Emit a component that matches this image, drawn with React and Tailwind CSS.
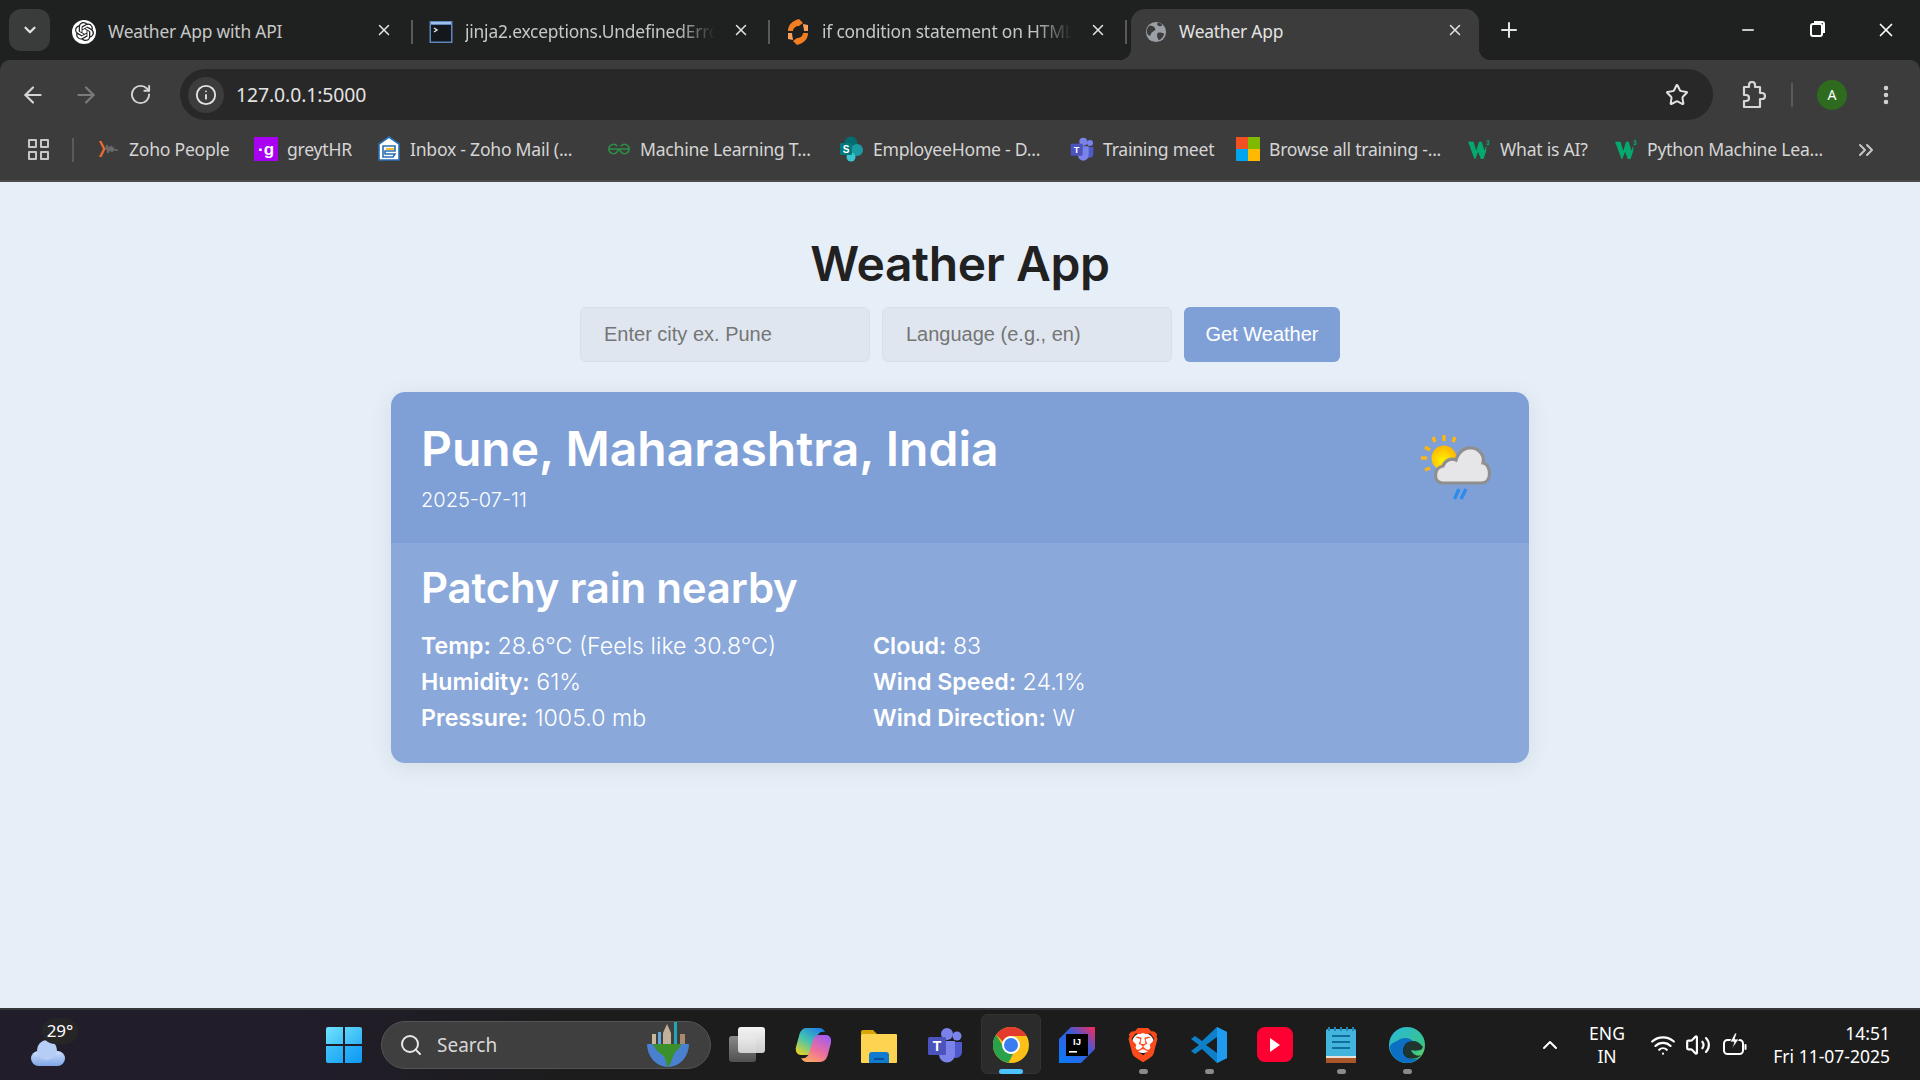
import React from 'react';
import { ArrowLeft, ArrowRight, RotateCw, Info, Star, EllipsisVertical, ChevronDown, ChevronUp, ChevronsRight, X, Plus, Minus, Search, Wifi, Volume2 } from 'lucide-react';
import { SiOpenai, SiBrave } from 'react-icons/si';

const uiFont = "font-['Noto_Sans',sans-serif]";

/* ---------- favicons ---------- */
function Globe({ className }) {
  return (
    <svg viewBox="0 0 24 24" className={className}>
      <circle cx="12" cy="12" r="11" fill="#9aa0a6" />
      <path d="M5 5c3 0 5 1 6 3s-1 3-3 4-1 4-3 4-3-3-3-5 1-4 3-6zM14 13c2-1 5 0 7 1-1 3-3 6-6 7-1-2-3-6-1-8zM14 2c2 0 4 1 5 3-2 1-4 1-5 0s-1-2 0-3z" fill="#3c3c3c" />
    </svg>
  );
}

function CmdIcon() {
  return (
    <svg viewBox="0 0 24 24" className="w-6 h-6">
      <rect x="0.5" y="1" width="23" height="22" fill="#5f86bd" />
      <rect x="2" y="5" width="20" height="16.5" fill="#14181d" />
      <rect x="2" y="2" width="20" height="2" fill="#9cc0ea" />
      <path d="M5 8l3 2-3 2" stroke="#e8e8e8" strokeWidth="1.4" fill="none" />
    </svg>
  );
}

function HubIcon() {
  return (
    <svg viewBox="0 0 22 26" className="w-[22px] h-[26px]">
      <path d="M12 0l4 4-4 3c-3 0-6 2-6 5H1C1 6 5 2 12 0z" fill="#f37d22" />
      <path d="M10 26l-4-4 4-3c3 0 6-2 6-5h5c0 6-4 10-11 12z" fill="#f37d22" />
      <path d="M16 5l5 1v6h-4c0-3-1-5-1-7zM6 21l-5-1v-6h4c0 3 1 5 1 7z" fill="#f9a15a" />
    </svg>
  );
}

function ZohoIcon() {
  return (
    <svg viewBox="0 0 24 24" className="w-6 h-6">
      <path d="M3 4l4 8-4 8h2.5l4-8-4-8z" fill="#ef6b2c" />
      <path d="M9 12h1l1-4 1 8 1-6 1 4 1-5 1 6 1-4 1 2h4" stroke="#6a6a6a" strokeWidth="1.6" fill="none" />
    </svg>
  );
}

function GreytIcon() {
  return (
    <div className="w-6 h-6 bg-[#a800f0] flex items-center justify-center text-white text-[17px] font-bold leading-none font-['Liberation_Sans',sans-serif]">·g</div>
  );
}

function MailIcon() {
  return (
    <svg viewBox="0 0 24 26" className="w-6 h-[26px]">
      <path d="M12 1l10 7v16H2V8z" fill="#fff" stroke="#2a6fb5" strokeWidth="1.6" />
      <path d="M6 10h12v5H8v3h10l-2 3H6z" fill="none" stroke="#2a6fb5" strokeWidth="1.6" />
      <path d="M9 13h8" stroke="#f3b61c" strokeWidth="1.8" />
    </svg>
  );
}

function GfgIcon() {
  return (
    <svg viewBox="0 0 26 14" className="w-[24px] h-[14px]">
      <path d="M13 7H2a5 5 0 0 1 9-3M13 7h11a5 5 0 0 0-9-3M2 7a5 5 0 0 0 9 3l2-3M24 7a5 5 0 0 1-9 3l-2-3" fill="none" stroke="#2f8d46" strokeWidth="1.7" />
    </svg>
  );
}

function SharePointIcon() {
  return (
    <svg viewBox="0 0 24 26" className="w-6 h-[26px]">
      <circle cx="11" cy="7" r="6.5" fill="#036c70" />
      <circle cx="17" cy="14" r="6" fill="#1a9ba1" />
      <circle cx="11" cy="21" r="4.5" fill="#37c6d0" />
      <rect x="0" y="7" width="12" height="12" rx="1" fill="#03787c" />
      <text x="6" y="17" fontSize="10" fontWeight="700" fill="#fff" textAnchor="middle" fontFamily="Liberation Sans, sans-serif">S</text>
    </svg>
  );
}

function TeamsIcon({ className }) {
  return (
    <svg viewBox="0 0 36 36" className={className}>
      <circle cx="30" cy="9" r="4.5" fill="#7b83eb" />
      <path d="M24 15h11v10a6 6 0 0 1-6 6c-3 0-5-2-5-5z" fill="#5059c9" />
      <circle cx="20" cy="7" r="6" fill="#7b83eb" />
      <path d="M11 14h17v13a8 8 0 0 1-16 1z" fill="#7b83eb" />
      <rect x="1" y="10" width="18" height="18" rx="1.5" fill="#4b53bc" />
      <text x="10" y="24" fontSize="14" fontWeight="700" fill="#fff" textAnchor="middle" fontFamily="Liberation Sans, sans-serif">T</text>
    </svg>
  );
}

function MsIcon() {
  return (
    <div className="w-6 h-6 grid grid-cols-2 grid-rows-2">
      <div className="bg-[#f25022]" />
      <div className="bg-[#7fba00]" />
      <div className="bg-[#00a4ef]" />
      <div className="bg-[#ffb900]" />
    </div>
  );
}

function W3Icon() {
  return (
    <svg viewBox="0 0 24 22" className="w-[22px] h-[20px]">
      <path d="M0 3h6l3 10 3-10h3l3 10 2-6v6l-3 9h-3l-3-8-3 8H7z" fill="#04aa6d" />
      <text x="20" y="7" fontSize="7" fill="#04aa6d" fontWeight="700" fontFamily="Liberation Sans, sans-serif">3</text>
    </svg>
  );
}

function ExtensionIcon() {
  return (
    <svg viewBox="0 0 26 28" className="w-[26px] h-[28px]" fill="none" stroke="#d5d5d5" strokeWidth="2.2" strokeLinejoin="round">
      <path d="M4 6h5V4a3 3 0 0 1 6 0v2h5v6h2a3 3 0 0 1 0 6h-2v8H4v-6h2a3 3 0 0 0 0-6H4z" />
    </svg>
  );
}

/* ---------- browser chrome ---------- */
const tabs = [
  { title: 'Weather App with API', icon: <div className="w-6 h-6 rounded-full bg-white flex items-center justify-center"><SiOpenai className="w-[19px] h-[19px] text-[#222]" /></div> },
  { title: 'jinja2.exceptions.UndefinedError', icon: <CmdIcon />, fade: true },
  { title: 'if condition statement on HTML template', icon: <HubIcon />, fade: true },
];

function Tab({ tab, last }) {
  return (
    <div className="relative w-[357px] h-[51px] flex items-center pl-4 pb-[6px] shrink-0">
      <div className="w-6 flex justify-center shrink-0">{tab.icon}</div>
      <div className={`ml-3 w-[250px] whitespace-nowrap overflow-hidden text-[17.4px] tracking-[-0.2px] text-[#c7c7c7] ${tab.fade ? '[mask-image:linear-gradient(90deg,#000_85%,transparent)]' : ''}`}>{tab.title}</div>
      <X className="absolute left-[319px] top-[12px] w-[18px] h-[18px] text-[#e3e3e3]" strokeWidth={2} />
      {!last && <div className="absolute right-0 top-[11px] w-[2px] h-[24px] bg-[#5a5a5a]" />}
    </div>
  );
}

function TabStrip() {
  return (
    <div className="h-[60px] pl-[9px] pt-[9px] flex bg-[#1f2120] shrink-0">
      <div className="w-[41px] h-[42px] rounded-[12px] bg-[#3a3b3b] flex items-center justify-center shrink-0">
        <ChevronDown className="w-[18px] h-[18px] text-[#e3e3e3]" strokeWidth={3} />
      </div>
      <div className="ml-[6px] flex">
        {tabs.map((t) => <Tab key={t.title} tab={t} />)}
        {/* active tab */}
        <div className="relative ml-[4px] w-[348px] h-[51px] bg-[#3c3c3c] rounded-t-[14px] flex items-center pl-[14px] pb-[6px] shrink-0">
          <div className="absolute left-[-12px] bottom-0 w-3 h-3 bg-[radial-gradient(circle_at_0_0,transparent_12px,#3c3c3c_12.5px)]" />
          <div className="absolute right-[-12px] bottom-0 w-3 h-3 bg-[radial-gradient(circle_at_100%_0,transparent_12px,#3c3c3c_12.5px)]" />
          <Globe className="w-[22px] h-[22px]" />
          <div className="ml-3 text-[17.4px] tracking-[-0.2px] text-[#e3e3e3] whitespace-nowrap">Weather App</div>
          <X className="absolute left-[315px] top-[12px] w-[18px] h-[18px] text-[#e3e3e3]" strokeWidth={2} />
        </div>
        <Plus className="ml-[18px] mt-[9px] w-6 h-6 text-[#e3e3e3]" strokeWidth={2} />
      </div>
      <div className="ml-auto flex -mt-[9px]">
        <div className="w-[69px] h-[60px] flex items-center justify-center"><Minus className="w-[18px] h-[18px] text-white" strokeWidth={2} /></div>
        <div className="w-[69px] h-[60px] flex items-center justify-center">
          <div className="relative w-[13px] h-[14px] border-2 border-white rounded-[3px]">
            <div className="absolute -top-[4px] -right-[4px] w-[11px] h-[12px] border-t-2 border-r-2 border-white rounded-tr-[3px]" />
          </div>
        </div>
        <div className="w-[69px] h-[60px] flex items-center justify-center"><X className="w-[22px] h-[22px] text-white" strokeWidth={1.8} /></div>
      </div>
    </div>
  );
}

function Toolbar() {
  return (
    <div className="h-[51px] flex items-center">
      <ArrowLeft className="ml-[20px] w-[26px] h-[26px] text-[#d5d5d5]" strokeWidth={2} />
      <ArrowRight className="ml-[27px] w-[26px] h-[26px] text-[#7b7b7b]" strokeWidth={2} />
      <RotateCw className="ml-[30px] w-[23px] h-[23px] text-[#d5d5d5]" strokeWidth={2} />
      <div className="ml-[28px] w-[1533px] h-[51px] rounded-full bg-[#282828] flex items-center pl-[8px] pr-[24px] shrink-0">
        <div className="w-9 h-9 rounded-full bg-[#3c3c3c] flex items-center justify-center">
          <Info className="w-[22px] h-[22px] text-[#e3e3e3]" strokeWidth={2} />
        </div>
        <span className="ml-[12px] text-[19.4px] tracking-[-0.1px] text-[#e3e3e3]">127.0.0.1:5000</span>
        <Star className="ml-auto w-6 h-6 text-[#e3e3e3]" strokeWidth={2} />
      </div>
      <div className="ml-[27px]"><ExtensionIcon /></div>
      <div className="ml-[25px] w-[2px] h-[24px] bg-[#5a5a5a]" />
      <div className="ml-[24px] w-[30px] h-[30px] rounded-full bg-[#2f6b1f] text-white text-[14px] flex items-center justify-center">A</div>
      <EllipsisVertical className="ml-[27px] w-[24px] h-[24px] text-[#d5d5d5]" strokeWidth={2.5} />
    </div>
  );
}

const bookmarks = [
  { label: 'Zoho People', icon: <ZohoIcon />, w: 'w-[158px]' },
  { label: 'greytHR', icon: <GreytIcon />, w: 'w-[123px]' },
  { label: 'Inbox - Zoho Mail (...', icon: <MailIcon />, w: 'w-[230px]' },
  { label: 'Machine Learning T...', icon: <GfgIcon />, w: 'w-[233px]' },
  { label: 'EmployeeHome - D...', icon: <SharePointIcon />, w: 'w-[230px]' },
  { label: 'Training meet', icon: <TeamsIcon className="w-6 h-6" />, w: 'w-[166px]' },
  { label: 'Browse all training -...', icon: <MsIcon />, w: 'w-[231px]' },
  { label: 'What is AI?', icon: <W3Icon />, w: 'w-[147px]' },
  { label: 'Python Machine Lea...', icon: <W3Icon />, w: 'w-[236px]' },
];

function BookmarksBar() {
  return (
    <div className="h-[62px] flex items-center border-b-2 border-[#4a4a4a] pb-[1px]">
      <div className="ml-[28px] grid grid-cols-2 gap-[3px]">
        <div className="w-[9px] h-[9px] border-2 border-[#c7c7c7] rounded-[1px]" />
        <div className="w-[9px] h-[9px] border-2 border-[#c7c7c7] rounded-[1px]" />
        <div className="w-[9px] h-[9px] border-2 border-[#c7c7c7] rounded-[1px]" />
        <div className="w-[9px] h-[9px] border-2 border-[#c7c7c7] rounded-[1px]" />
      </div>
      <div className="ml-[23px] w-[2px] h-[24px] bg-[#5a5a5a]" />
      <div className="ml-[22px] flex items-center">
        {bookmarks.map((b) => (
          <div key={b.label} className={`${b.w} flex items-center shrink-0`}>
            <div className="w-6 flex justify-center shrink-0">{b.icon}</div>
            <span className="ml-[9px] text-[17.6px] tracking-[-0.25px] text-[#d5d5d5] whitespace-nowrap">{b.label}</span>
          </div>
        ))}
      </div>
      <ChevronsRight className="ml-[4px] w-6 h-6 text-[#c7c7c7]" strokeWidth={2} />
    </div>
  );
}

/* ---------- the page itself ---------- */
function PartlyRainy() {
  return (
    <svg viewBox="0 0 80 80" className="w-20 h-20 shrink-0">
      <defs>
        <radialGradient id="sunFill" cx="0.45" cy="0.6" r="0.6">
          <stop offset="0" stopColor="#fff200" />
          <stop offset="1" stopColor="#ffb400" />
        </radialGradient>
      </defs>
      <path d="M2 30h6M6 19l5 3M6 42l5-2M14 9l2 5M25 7v6M36 9l-2 5" stroke="#fcb514" strokeWidth="3.4" />
      <circle cx="25" cy="30" r="12.5" fill="url(#sunFill)" />
      <path d="M24 55C14 55 14 40 24 38C26 32 32 30 37 32C40 22 48 19 52 20C60 20 66 28 64 35C72 36 74 55 62 55Z" fill="#e6e6e8" stroke="#8f8f8f" strokeWidth="3.2" />
      <path d="M40 61l-4.5 10M47 61l-5 10" stroke="#2b8cee" strokeWidth="3.4" />
    </svg>
  );
}

function Stat({ label, value }) {
  return (
    <p>
      <span className="font-semibold">{label}:</span> <span className="font-light">{value}</span>
    </p>
  );
}

function WeatherApp() {
  return (
    <main className="flex-1 bg-[#e6eef8] flex flex-col items-center pt-[46px] font-['Inter',sans-serif] min-h-0">
      <h1 className="text-[48px] leading-[72px] font-semibold tracking-[-0.4px] text-[#212121]">Weather App</h1>
      <div className="mt-[7px] flex gap-3 font-['Liberation_Sans',sans-serif] text-[20px]">
        <input readOnly placeholder="Enter city ex. Pune" className="w-[290px] h-[55px] px-[23px] bg-[#dfe6ef] border border-[#d8e0ea] rounded-[6px] placeholder:text-[#757575] outline-none" />
        <input readOnly placeholder="Language (e.g., en)" className="w-[290px] h-[55px] px-[23px] bg-[#dfe6ef] border border-[#d8e0ea] rounded-[6px] placeholder:text-[#757575] outline-none" />
        <button className="w-[156px] h-[55px] pb-[2px] bg-[#7fa0d6] rounded-[6px] text-white">Get Weather</button>
      </div>
      <section className="mt-[30px] w-[1138px] rounded-[14px] overflow-hidden shadow-[0_4px_24px_rgba(0,0,0,0.08)] text-white">
        <div className="h-[151px] bg-[#7fa0d6] flex items-center justify-between pl-[30px] pr-[30px]">
          <div>
            <h2 className="text-[48px] leading-[56px] font-semibold">Pune, Maharashtra, India</h2>
            <p className="mt-[9px] text-[20px] leading-[28px] font-light">2025-07-11</p>
          </div>
          <PartlyRainy />
        </div>
        <div className="h-[220px] bg-[#8aa8d9] pl-[30px] pt-[18px]">
          <h3 className="text-[42px] leading-[54px] font-semibold tracking-[-0.2px]">Patchy rain nearby</h3>
          <div className="mt-[13px] grid grid-cols-[452px_1fr] text-[23.2px] leading-[36px]">
            <Stat label="Temp" value="28.6°C (Feels like 30.8°C)" />
            <Stat label="Cloud" value="83" />
            <Stat label="Humidity" value="61%" />
            <Stat label="Wind Speed" value="24.1%" />
            <Stat label="Pressure" value="1005.0 mb" />
            <Stat label="Wind Direction" value="W" />
          </div>
        </div>
      </section>
    </main>
  );
}

/* ---------- taskbar ---------- */
function TaskView() {
  return (
    <div className="relative w-9 h-9">
      <div className="absolute left-0 bottom-[1px] w-[27px] h-[26px] rounded-[3px] bg-gradient-to-b from-[#8a8a8a] to-[#505050]" />
      <div className="absolute right-0 top-0 w-[27px] h-[26px] rounded-[3px] bg-gradient-to-b from-[#ffffff] to-[#d6d6d6] opacity-95" />
    </div>
  );
}

function Copilot() {
  return (
    <svg viewBox="0 0 36 36" className="w-9 h-9">
      <defs>
        <linearGradient id="cpA" x1="0.8" y1="0" x2="0.1" y2="1">
          <stop offset="0" stopColor="#1f7fe8" />
          <stop offset="0.5" stopColor="#45c4b0" />
          <stop offset="1" stopColor="#f2d21c" />
        </linearGradient>
        <linearGradient id="cpB" x1="0.8" y1="0" x2="0.2" y2="1">
          <stop offset="0" stopColor="#a25cf0" />
          <stop offset="0.55" stopColor="#ee6f9c" />
          <stop offset="1" stopColor="#fbaa5c" />
        </linearGradient>
      </defs>
      <path d="M11 1h13c3 0 5 2 6 4-4-1-7 1-8 5l-4 13c-1 3-3 5-6 5H6c-4 0-6-4-5-8l3-11C5 4 8 1 11 1z" fill="url(#cpA)" />
      <path d="M25 35H12c-3 0-5-2-6-4 4 1 7-1 8-5l4-13c1-3 3-5 6-5h7c4 0 6 4 5 8l-3 11c-1 5-4 8-8 8z" fill="url(#cpB)" />
    </svg>
  );
}

function Explorer() {
  return (
    <svg viewBox="0 0 36 36" className="w-9 h-9">
      <path d="M0 5a2 2 0 0 1 2-2h10l4 4h-16z" fill="#d9a406" />
      <rect x="0" y="7" width="36" height="29" rx="1" fill="#fdd352" />
      <path d="M8 36V28a3 3 0 0 1 3-3h14a3 3 0 0 1 3 3v8z" fill="#0e7bd1" />
      <rect x="13" y="31" width="10" height="2" fill="#074f91" />
    </svg>
  );
}

function ChromeIcon() {
  return (
    <svg viewBox="0 0 36 36" className="w-9 h-9">
      <circle cx="18" cy="18" r="18" fill="#fbc116" />
      <path d="M18 0a18 18 0 0 1 15.6 9H18a9 9 0 0 0-8.3 5.5L3.2 7.6A18 18 0 0 1 18 0z" fill="#e33b2e" />
      <path d="M3.2 7.6l7.8 13.5A9 9 0 0 0 20 27l-4.5 8.8A18 18 0 0 1 3.2 7.6z" fill="#2aa24c" />
      <circle cx="18" cy="18" r="9" fill="#fff" />
      <circle cx="18" cy="18" r="7" fill="#3a7df0" />
    </svg>
  );
}

function Idea() {
  return (
    <svg viewBox="0 0 36 36" className="w-9 h-9">
      <defs>
        <linearGradient id="ijA" x1="0" y1="1" x2="1" y2="0">
          <stop offset="0" stopColor="#087cfa" />
          <stop offset="0.6" stopColor="#3b5bd9" />
          <stop offset="1" stopColor="#fe2857" />
        </linearGradient>
      </defs>
      <path d="M12 0h24v22l-14 14H0V12z" fill="url(#ijA)" />
      <rect x="7" y="7" width="22" height="22" fill="#000" />
      <text x="18" y="18" fontSize="9.5" fontWeight="700" fill="#fff" textAnchor="middle" fontFamily="Liberation Sans, sans-serif">IJ</text>
      <rect x="10" y="24" width="8" height="1.6" fill="#fff" />
    </svg>
  );
}

function BraveIcon() {
  return (
    <div className="relative w-[34px] h-9">
      <div className="absolute left-[6px] top-[6px] w-[22px] h-[20px] rounded-full bg-white" />
      <SiBrave className="relative w-[34px] h-9 text-[#fb4a1b]" />
    </div>
  );
}

function VsCode() {
  return (
    <svg viewBox="0 0 36 36" className="w-9 h-9">
      <path d="M26 0l10 5v26l-10 5-15-14-7 5-4-3 8-6-8-6 4-3 7 5z" fill="#0e7fc9" />
      <path d="M26 0l10 5v26l-10 5z" fill="#1f9cf0" />
      <path d="M26 10L15 18l11 8z" fill="#1c1c1c" />
    </svg>
  );
}

function YouTube() {
  return (
    <div className="w-9 h-9 flex items-center justify-center">
      <div className="w-9 h-[35px] rounded-[8px] bg-[#ff0033] flex items-center justify-center">
        <div className="w-0 h-0 border-y-[7px] border-y-transparent border-l-[10px] border-l-white" />
      </div>
    </div>
  );
}

function Notepad() {
  return (
    <svg viewBox="0 0 30 36" className="w-[30px] h-9">
      <rect x="0" y="2" width="30" height="34" rx="1.5" fill="#43b4de" />
      <rect x="0" y="30" width="30" height="6" fill="#a8562a" />
      <rect x="0" y="29" width="30" height="2" fill="#e8e3da" />
      <path d="M6 9h18M6 15h18M6 21h18" stroke="#0f6e9b" strokeWidth="2" />
      <path d="M3 0v4M9 0v4M15 0v4M21 0v4M27 0v4" stroke="#1b87b5" strokeWidth="2" />
    </svg>
  );
}

function Edge() {
  return (
    <svg viewBox="0 0 36 36" className="w-9 h-9">
      <defs>
        <linearGradient id="edgeA" x1="0" y1="0" x2="1" y2="1">
          <stop offset="0" stopColor="#2bb6e0" />
          <stop offset="0.7" stopColor="#36c58c" />
          <stop offset="1" stopColor="#7fdc5a" />
        </linearGradient>
      </defs>
      <circle cx="18" cy="18" r="18" fill="url(#edgeA)" />
      <path d="M1 20c0 9 8 16 17 16 5 0 9-2 12-5-8 3-15-1-15-8 0-5 5-9 9-9-4-4-11-4-16 0-4 2-7 3-7 6z" fill="#0b6fc4" />
      <path d="M14 24c0-6 4-10 10-10 4 0 7 2 9 5 1-1 1 2 0 3-2 2-9 2-11 1 1 3 5 7 10 5-3 5-18 6-18-4z" fill="#1c1c1c" opacity="0.85" />
    </svg>
  );
}

function Globe3d() {
  return (
    <svg viewBox="0 0 42 50" className="w-[42px] h-[50px]">
      <rect x="5" y="14" width="4" height="12" fill="#c9b79c" />
      <rect x="11" y="12" width="3" height="14" fill="#5fa6dc" />
      <path d="M16 26V13l4-9 4 9v13z" fill="#c3b09a" />
      <rect x="27" y="2" width="3" height="24" fill="#23a5b5" />
      <rect x="33" y="14" width="5" height="12" fill="#a98a6e" />
      <path d="M0 24h42a21 23 0 0 1-42 0z" fill="#4a80d0" />
      <path d="M6 24h28c0 4-5 6-7 10-2 5-4 13-7 13 0-5-2-8-3-11-2-1-9-6-11-12z" fill="#3d8f2c" />
    </svg>
  );
}

function Windows11() {
  return (
    <div className="grid grid-cols-2 gap-[2px] w-[36px] h-[36px]">
      <div className="bg-gradient-to-br from-[#6fe2ff] to-[#3ec3f7] rounded-tl-[2px]" />
      <div className="bg-gradient-to-br from-[#5cd5fb] to-[#2bb2f5] rounded-tr-[2px]" />
      <div className="bg-gradient-to-br from-[#3fc3f8] to-[#1ba7f7] rounded-bl-[2px]" />
      <div className="bg-gradient-to-br from-[#2ab4f7] to-[#0f97f4] rounded-br-[2px]" />
    </div>
  );
}

const pinned = [
  { id: 'task', icon: <TaskView /> },
  { id: 'copilot', icon: <Copilot /> },
  { id: 'explorer', icon: <Explorer /> },
  { id: 'teams', icon: <TeamsIcon className="w-9 h-9" /> },
  { id: 'chrome', icon: <ChromeIcon />, active: true },
  { id: 'idea', icon: <Idea /> },
  { id: 'brave', icon: <BraveIcon />, open: true },
  { id: 'vscode', icon: <VsCode />, open: true },
  { id: 'youtube', icon: <YouTube /> },
  { id: 'notepad', icon: <Notepad />, open: true },
  { id: 'edge', icon: <Edge />, open: true },
];

function Taskbar() {
  return (
    <footer className={`h-[72px] shrink-0 border-t-2 border-[#35373a] bg-[linear-gradient(90deg,#211d2b_0%,#211d2b_15%,#1c1c1c_30%)] flex items-center text-white ${uiFont}`}>
      <div className="relative w-[326px] h-full shrink-0">
        <div className="absolute left-[29px] top-[26px] w-[36px] h-[30px]">
          <div className="absolute left-[2px] bottom-0 w-[34px] h-[15px] rounded-full bg-gradient-to-b from-[#cfe0fa] to-[#7fa5e8]" />
          <div className="absolute left-[8px] top-[4px] w-[20px] h-[20px] rounded-full bg-[#b6cef5]" />
        </div>
        <div className="absolute left-[42px] top-[8px] w-[36px] h-[26px] rounded-full bg-[#262626] text-[17px] leading-[26px] text-center">29°</div>
      </div>
      <Windows11 />
      <div className="ml-[19px] w-[330px] h-[48px] rounded-full bg-[#3f3f3f] border border-[#545454] flex items-center pl-[17px] pr-[21px] shrink-0">
        <Search className="w-[24px] h-[24px] text-[#e8e8e8]" strokeWidth={2} />
        <span className="ml-[14px] text-[19px] text-[#d8d8d8]">Search</span>
        <div className="ml-auto"><Globe3d /></div>
      </div>
      <div className="ml-[3px] flex">
        {pinned.map((p) => (
          <div key={p.id} className="relative w-[66px] h-[70px] flex items-center justify-center">
            {p.active && <div className="absolute left-[3px] top-[4px] w-[60px] h-[60px] rounded-[6px] bg-[#2b2b2b] border border-[#333]" />}
            <div className="relative flex items-center justify-center -mt-[1px]">{p.icon}</div>
            {p.active && <div className="absolute left-[21px] bottom-[6px] w-[24px] h-[5px] rounded-full bg-[#4cc2ff]" />}
            {p.open && <div className="absolute left-[29px] bottom-[6px] w-[9px] h-[5px] rounded-full bg-[#8a8a8a]" />}
          </div>
        ))}
      </div>
      <ChevronUp className="ml-[98px] w-[24px] h-[24px] text-white" strokeWidth={2} />
      <div className="ml-[15px] w-[60px] text-center text-[17.5px] leading-[23px]">
        <div>ENG</div>
        <div>IN</div>
      </div>
      <Wifi className="ml-[13px] w-[26px] h-[26px] text-white" strokeWidth={2} />
      <Volume2 className="ml-[9px] w-[26px] h-[26px] text-white" strokeWidth={2} />
      <svg viewBox="0 0 26 26" className="ml-[11px] w-[26px] h-[26px]">
        <rect x="2" y="8" width="19" height="14" rx="3.5" fill="none" stroke="#fff" strokeWidth="2" />
        <rect x="22.5" y="12" width="2" height="6" rx="1" fill="#fff" />
        <path d="M13 1l-5 9h4l-2 7 7-10h-4l2-6z" fill="#fff" stroke="#1c1c1c" strokeWidth="0.8" />
      </svg>
      <div className="ml-auto pr-[30px] text-right text-[17.5px] leading-[23px] whitespace-nowrap">
        <div>14:51</div>
        <div>Fri 11-07-2025</div>
      </div>
    </footer>
  );
}

export default function App() {
  return (
    <div className="w-[1920px] h-[1080px] flex flex-col overflow-hidden">
      <header className={`shrink-0 ${uiFont}`}>
        <TabStrip />
        <div className="bg-[#1f2120]">
          <div className="bg-[#3c3c3c] rounded-t-[10px] pt-[9px]">
            <Toolbar />
            <BookmarksBar />
          </div>
        </div>
      </header>
      <WeatherApp />
      <Taskbar />
    </div>
  );
}
